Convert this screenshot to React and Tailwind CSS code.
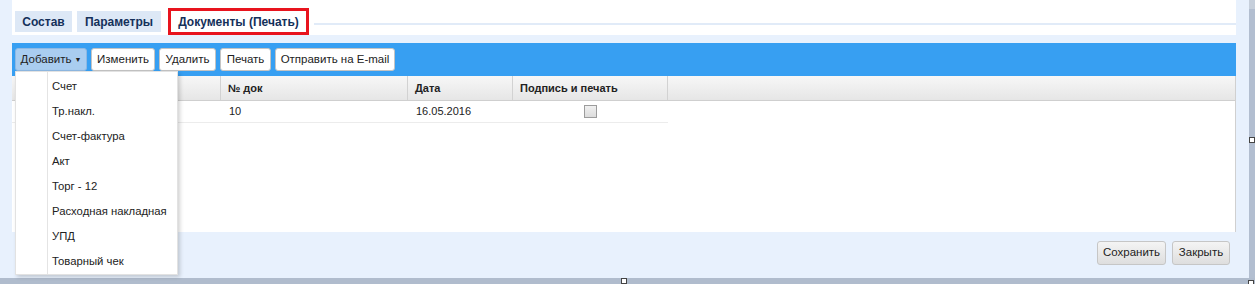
import React from 'react';

const MENU = ['Счет', 'Тр.накл.', 'Счет-фактура', 'Акт', 'Торг - 12', 'Расходная накладная', 'УПД', 'Товарный чек'];

const COLS = [
  { title: '', w: 'w-[209px]' },
  { title: '№ док', w: 'w-[187px]' },
  { title: 'Дата', w: 'w-[105px]' },
  { title: 'Подпись и печать', w: 'w-[155px]' },
];

function ToolButton({ children, active, w }) {
  return (
    <button
      className={
        w +
        ' h-[23px] rounded-[3px] border text-[11.5px] text-[#222] leading-none flex items-center justify-center ' +
        (active ? 'bg-[#a9cdf0] border-[#8fb9e3]' : 'bg-white border-[#c4c4c4]')
      }
    >
      {children}
    </button>
  );
}

function FooterButton({ children, w }) {
  return (
    <button className={w + ' h-[24px] rounded-[3px] border border-[#c6c6c6] bg-gradient-to-b from-[#f4f4f4] to-[#dedede] text-[11.5px] text-[#222]'}>
      {children}
    </button>
  );
}

export default function App() {
  return (
    <div className="w-[1255px] h-[284px] bg-[#e8f1fd] flex flex-col overflow-hidden relative font-['Liberation_Sans',Arial,sans-serif]">
      <div className="flex h-[278px]">
        <div className="w-[1249px] pl-[12px] pr-[13px] flex flex-col">
          {/* tabs */}
          <div className="h-[35px] bg-white relative flex items-start pl-[3px] pt-[11px] gap-[5px]">
            <div className="w-[57px] h-[21px] bg-[#dde8f6] text-[12px] font-bold text-[#14305a] flex items-center justify-center">Состав</div>
            <div className="w-[84px] h-[21px] bg-[#dde8f6] text-[12px] font-bold text-[#14305a] flex items-center justify-center">Параметры</div>
            <div className="ml-[2px] -mt-[3px] w-[141px] h-[27px] border-[3px] border-[#e8141e] bg-white text-[12px] font-bold text-[#14305a] flex items-center justify-center">
              Документы (Печать)
            </div>
            <div className="flex-1 mt-[12px] h-[2px] bg-[#e1ebf8]" />
          </div>

          <div className="h-[8px]" />

          {/* toolbar */}
          <div className="h-[33px] bg-[#379ff2] flex items-center pl-[3px] gap-[4px]">
            <ToolButton active w="w-[72px]">
              <span className="flex items-center gap-[3px]">
                Добавить <span className="text-[7px]">▼</span>
              </span>
            </ToolButton>
            <ToolButton w="w-[64px]">Изменить</ToolButton>
            <ToolButton w="w-[57px]">Удалить</ToolButton>
            <ToolButton w="w-[51px]">Печать</ToolButton>
            <ToolButton w="w-[120px]">Отправить на E-mail</ToolButton>
          </div>

          {/* grid */}
          <div className="h-[156px] bg-white border-r border-[#d0d0d0] flex flex-col">
            <div className="h-[25px] flex bg-gradient-to-b from-[#f7f7f7] to-[#e6e6e6] border-b border-[#cfcfcf]">
              {COLS.map((c, i) => (
                <div key={i} className={c.w + ' border-r border-[#d2d2d2] pl-[7px] flex items-center text-[11px] font-bold text-[#222]'}>
                  {c.title}
                </div>
              ))}
            </div>
            <div className="flex h-[22px] w-[656px] border-b border-[#ececec] text-[11px] text-[#222]">
              <div className="w-[209px]" />
              <div className="w-[187px] pl-[8px] flex items-center">10</div>
              <div className="w-[105px] pl-[8px] flex items-center">16.05.2016</div>
              <div className="w-[155px] flex items-center justify-center">
                <div className="w-[13px] h-[13px] border border-[#9c9c9c] bg-gradient-to-b from-[#f0f0f0] to-[#dcdcdc]" />
              </div>
            </div>
          </div>

          {/* footer */}
          <div className="flex-1 flex justify-end items-start pt-[9px] pr-[6px] gap-[6px]">
            <FooterButton w="w-[69px]">Сохранить</FooterButton>
            <FooterButton w="w-[58px]">Закрыть</FooterButton>
          </div>
        </div>
        <div className="flex-1 flex flex-col">
          <div className="h-[9px] bg-[#c6cfdb]" />
          <div className="flex-1 bg-[#b2bed0]" />
        </div>
      </div>
      <div className="flex-1 bg-[#b0bccd]" />

      {/* dropdown menu */}
      <div className="absolute left-[15px] top-[71px] w-[163px] h-[204px] bg-white border border-[#e2e2e2] shadow-[2px_2px_4px_rgba(0,0,0,0.18)] flex flex-col pt-[2px]">
        <div className="absolute left-[31px] top-0 bottom-0 w-px bg-[#e4e4e4]" />
        {MENU.map((m) => (
          <div key={m} className="h-[25px] pl-[36px] flex items-center text-[11.3px] text-[#222]">
            {m}
          </div>
        ))}
      </div>

      {/* resize handles */}
      <div className="absolute left-[1249px] top-[137px] w-[6px] h-[6px] bg-white border border-[#444]" />
      <div className="absolute left-[621px] top-[278px] w-[6px] h-[6px] bg-white border border-[#444]" />
      <div className="absolute left-[1248px] top-[280px] w-[6px] h-[6px] bg-white border border-[#444]" />
    </div>
  );
}
